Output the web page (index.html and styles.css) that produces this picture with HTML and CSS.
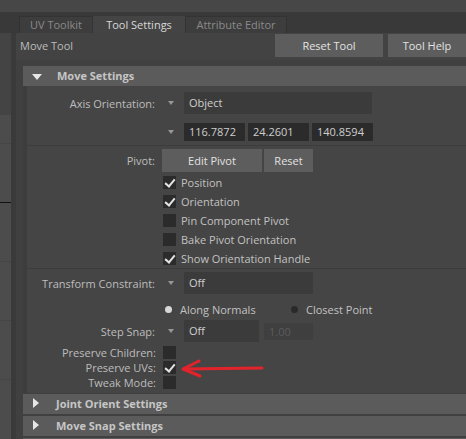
FILE: index.html
```html
<!DOCTYPE html>
<html lang="en">
<head>
    <meta charset="UTF-8">
    <title>Tool Settings</title>
    <link rel="stylesheet" href="styles.css">
</head>
<body>
    <div class="topbar"></div>
    <div class="tabbar">
        <div class="tab uv">UV Toolkit</div>
        <div class="tab active">Tool Settings</div>
        <div class="tab attr">Attribute Editor</div>
    </div>
    <div class="app">
        <div class="sidebar">
            <div class="side-top"></div>
            <div class="side-gap"></div>
            <div class="side-cell"></div>
            <div class="side-cell black"></div>
            <div class="side-cell"></div>
            <div class="side-cell"></div>
            <div class="side-cell"></div>
        </div>
        <div class="main">
            <div class="toolbar">
                <span class="tool-name">Move Tool</span>
                <button class="btn reset-tool">Reset Tool</button>
                <button class="btn tool-help">Tool Help</button>
            </div>
            <div class="scroll">
                <div class="frame-header open"><span class="arrow"></span>Move Settings</div>
                <div class="frame-body">
                    <div class="group">
                        <div class="row">
                            <div class="label">Axis Orientation:</div>
                            <div class="menu-arrow"></div>
                            <div class="field menu wide">Object</div>
                        </div>
                        <div class="row num-row">
                            <div class="label"></div>
                            <div class="menu-arrow"></div>
                            <div class="field num">116.7872</div>
                            <div class="field num">24.2601</div>
                            <div class="field num">140.8594</div>
                        </div>
                    </div>
                    <div class="group pivot-group">
                        <div class="row pivot-row">
                            <div class="label">Pivot:</div>
                            <button class="btn edit-pivot">Edit Pivot</button>
                            <button class="btn reset-pivot">Reset</button>
                        </div>
                        <div class="check-row"><span class="box checked"></span>Position</div>
                        <div class="check-row"><span class="box checked"></span>Orientation</div>
                        <div class="check-row"><span class="box"></span>Pin Component Pivot</div>
                        <div class="check-row"><span class="box"></span>Bake Pivot Orientation</div>
                        <div class="check-row"><span class="box checked"></span>Show Orientation Handle</div>
                    </div>
                    <div class="group constraint-group">
                        <div class="row">
                            <div class="label">Transform Constraint:</div>
                            <div class="menu-arrow"></div>
                            <div class="field menu mid">Off</div>
                        </div>
                        <div class="radio-row">
                            <span class="radio on"></span><span class="radio-text first">Along Normals</span>
                            <span class="radio"></span><span class="radio-text">Closest Point</span>
                        </div>
                        <div class="row snap-row">
                            <div class="label">Step Snap:</div>
                            <div class="menu-arrow"></div>
                            <div class="field menu short">Off</div>
                            <div class="field disabled">1.00</div>
                        </div>
                        <div class="opt-row">
                            <div class="label">Preserve Children:</div><span class="box"></span>
                        </div>
                        <div class="opt-row">
                            <div class="label">Preserve UVs:</div><span class="box checked"></span>
                        </div>
                        <div class="opt-row">
                            <div class="label">Tweak Mode:</div><span class="box"></span>
                        </div>
                    </div>
                </div>
                <div class="frame-header"><span class="arrow"></span>Joint Orient Settings</div>
                <div class="frame-header"><span class="arrow"></span>Move Snap Settings</div>
                <div class="frame-header"></div>
            </div>
        </div>
    </div>

    <!-- red annotation arrow drawn over the panel -->
    <svg class="annotation" width="90" height="20" viewBox="0 0 90 20">
        <path d="M5 10 L83 9" stroke="#e3232b" stroke-width="3" fill="none" stroke-linecap="round"/>
        <path d="M20 2 L4 10 L21 17" stroke="#e3232b" stroke-width="3" fill="none" stroke-linecap="round" stroke-linejoin="round"/>
    </svg>
</body>
</html>
```

FILE: styles.css
```css
* {
    margin: 0;
    padding: 0;
    box-sizing: border-box;
}

body {
    width: 466px;
    height: 439px;
    overflow: hidden;
    background: #404040;
    font-family: 'Open Sans', 'Noto Sans', sans-serif;
    font-size: 11px;
    color: #bdbdbd;
    position: relative;
}

button {
    font-family: inherit;
    font-size: inherit;
    border: none;
}

.topbar {
    height: 12px;
    background: #474747;
}

.tabbar {
    height: 21px;
    background: #393939;
    display: flex;
    align-items: flex-end;
    padding-left: 19px;
}

.tab {
    height: 17px;
    line-height: 16px;
    text-align: center;
    white-space: nowrap;
    background: #3d3d3d;
    border: 1px solid #333;
    border-bottom: none;
    color: #8a8a8a;
}

.tab.uv {
    width: 74px;
}

.tab.active {
    width: 92px;
    background: #444;
    color: #d8d8d8;
    border-color: #444;
}

.tab.attr {
    width: 102px;
}

.app {
    display: flex;
    height: 406px;
}

.sidebar {
    width: 16px;
    background: #4c4c4c;
    border-right: 5px solid #3a3a3a;
}

.side-top {
    height: 82px;
    background: #444;
}

.side-gap {
    height: 28px;
}

.side-cell {
    height: 59px;
    border-top: 1px solid #454545;
}

.side-cell.black {
    border-top-color: #111;
}

.main {
    flex: 1;
}

.toolbar {
    height: 27px;
    display: flex;
    align-items: flex-start;
    padding: 1px 0 0 4px;
    background: #434343;
}

.tool-name {
    flex: 1;
    line-height: 24px;
    color: #bcbcbc;
}

.btn {
    height: 23px;
    background: #5d5d5d;
    color: #e2e2e2;
}

.reset-tool {
    width: 108px;
    margin-right: 5px;
}

.tool-help {
    width: 78px;
}

.scroll {
    padding: 6px 0 0 7px;
}

.frame-header {
    height: 20px;
    background: #5b5b5b;
    color: #c6c6c6;
    font-weight: bold;
    line-height: 20px;
    padding-left: 33px;
    position: relative;
    margin-bottom: 2px;
}

.frame-header .arrow {
    position: absolute;
    left: 10px;
    top: 4px;
    width: 0;
    height: 0;
    border-top: 5px solid transparent;
    border-bottom: 5px solid transparent;
    border-left: 6px solid #e6e6e6;
}

.frame-header.open {
    margin-bottom: 0;
    padding-left: 34px;
}

.frame-header.open .arrow {
    left: 9px;
    top: 8px;
    border-left: 5px solid transparent;
    border-right: 5px solid transparent;
    border-top: 6px solid #e6e6e6;
    border-bottom: none;
}

.frame-body {
    height: 307px;
    padding-top: 6px;
    margin-bottom: 1px;
    background: #454545;
    border-left: 4px solid #3d3d3d;
}

.group {
    border-bottom: 1px solid #3c3c3c;
}

.row {
    display: flex;
    align-items: center;
    height: 22px;
}

.label {
    width: 135px;
    flex-shrink: 0;
    padding-right: 7px;
    text-align: right;
    white-space: nowrap;
    color: #bdbdbd;
}

.menu-arrow {
    width: 22px;
    height: 100%;
    position: relative;
}

.menu-arrow::after {
    content: '';
    position: absolute;
    left: 6px;
    top: 50%;
    margin-top: -2px;
    border-left: 3px solid transparent;
    border-right: 3px solid transparent;
    border-top: 4px solid #979797;
}

.field {
    height: 22px;
    line-height: 22px;
    padding-left: 5px;
    color: #cfcfcf;
}

.field.menu {
    background: #3b3b3b;
}

.wide { width: 188px; }
.mid { width: 129px; }
.short { width: 75px; }

.num-row {
    margin-top: 9px;
    height: 18px;
    margin-bottom: 4px;
}

.field.num {
    height: 18px;
    line-height: 18px;
    width: 61px;
    margin-right: 3px;
    background: #2b2b2b;
}

.pivot-group {
    padding-top: 3px;
}

.pivot-row {
    margin-bottom: 1px;
    height: 23px;
}

.edit-pivot {
    width: 100px;
    margin-right: 2px;
}

.reset-pivot {
    width: 49px;
}

.check-row {
    height: 19px;
    display: flex;
    align-items: center;
    padding-left: 136px;
    color: #c2c2c2;
}

.check-row .box {
    margin-right: 5px;
}

.box {
    width: 13px;
    height: 13px;
    background: #2b2b2b;
    position: relative;
    flex-shrink: 0;
}

.box.checked::after {
    content: '';
    position: absolute;
    left: 4px;
    top: 1px;
    width: 4px;
    height: 8px;
    border-right: 2px solid #e4e4e4;
    border-bottom: 2px solid #e4e4e4;
    transform: rotate(40deg);
}

.constraint-group {
    border-bottom: none;
    padding-top: 3px;
}

.radio-row {
    height: 22px;
    margin-top: 4px;
    display: flex;
    align-items: center;
    padding-left: 138px;
    color: #c2c2c2;
}

.radio {
    width: 7px;
    height: 7px;
    border-radius: 50%;
    background: #2a2a2a;
    margin-right: 8px;
}

.radio.on {
    background: #d8d8d8;
}

.radio-text.first {
    width: 111px;
}

.field.disabled {
    height: 17px;
    line-height: 17px;
    width: 49px;
    margin-left: 5px;
    background: #3f3f3f;
    color: #5c5c5c;
}

.snap-row {
    margin-bottom: 3px;
}

.opt-row {
    height: 15px;
    display: flex;
    align-items: center;
}

.opt-row .label {
    width: 136px;
}

.annotation {
    position: absolute;
    left: 179px;
    top: 359px;
}
```
